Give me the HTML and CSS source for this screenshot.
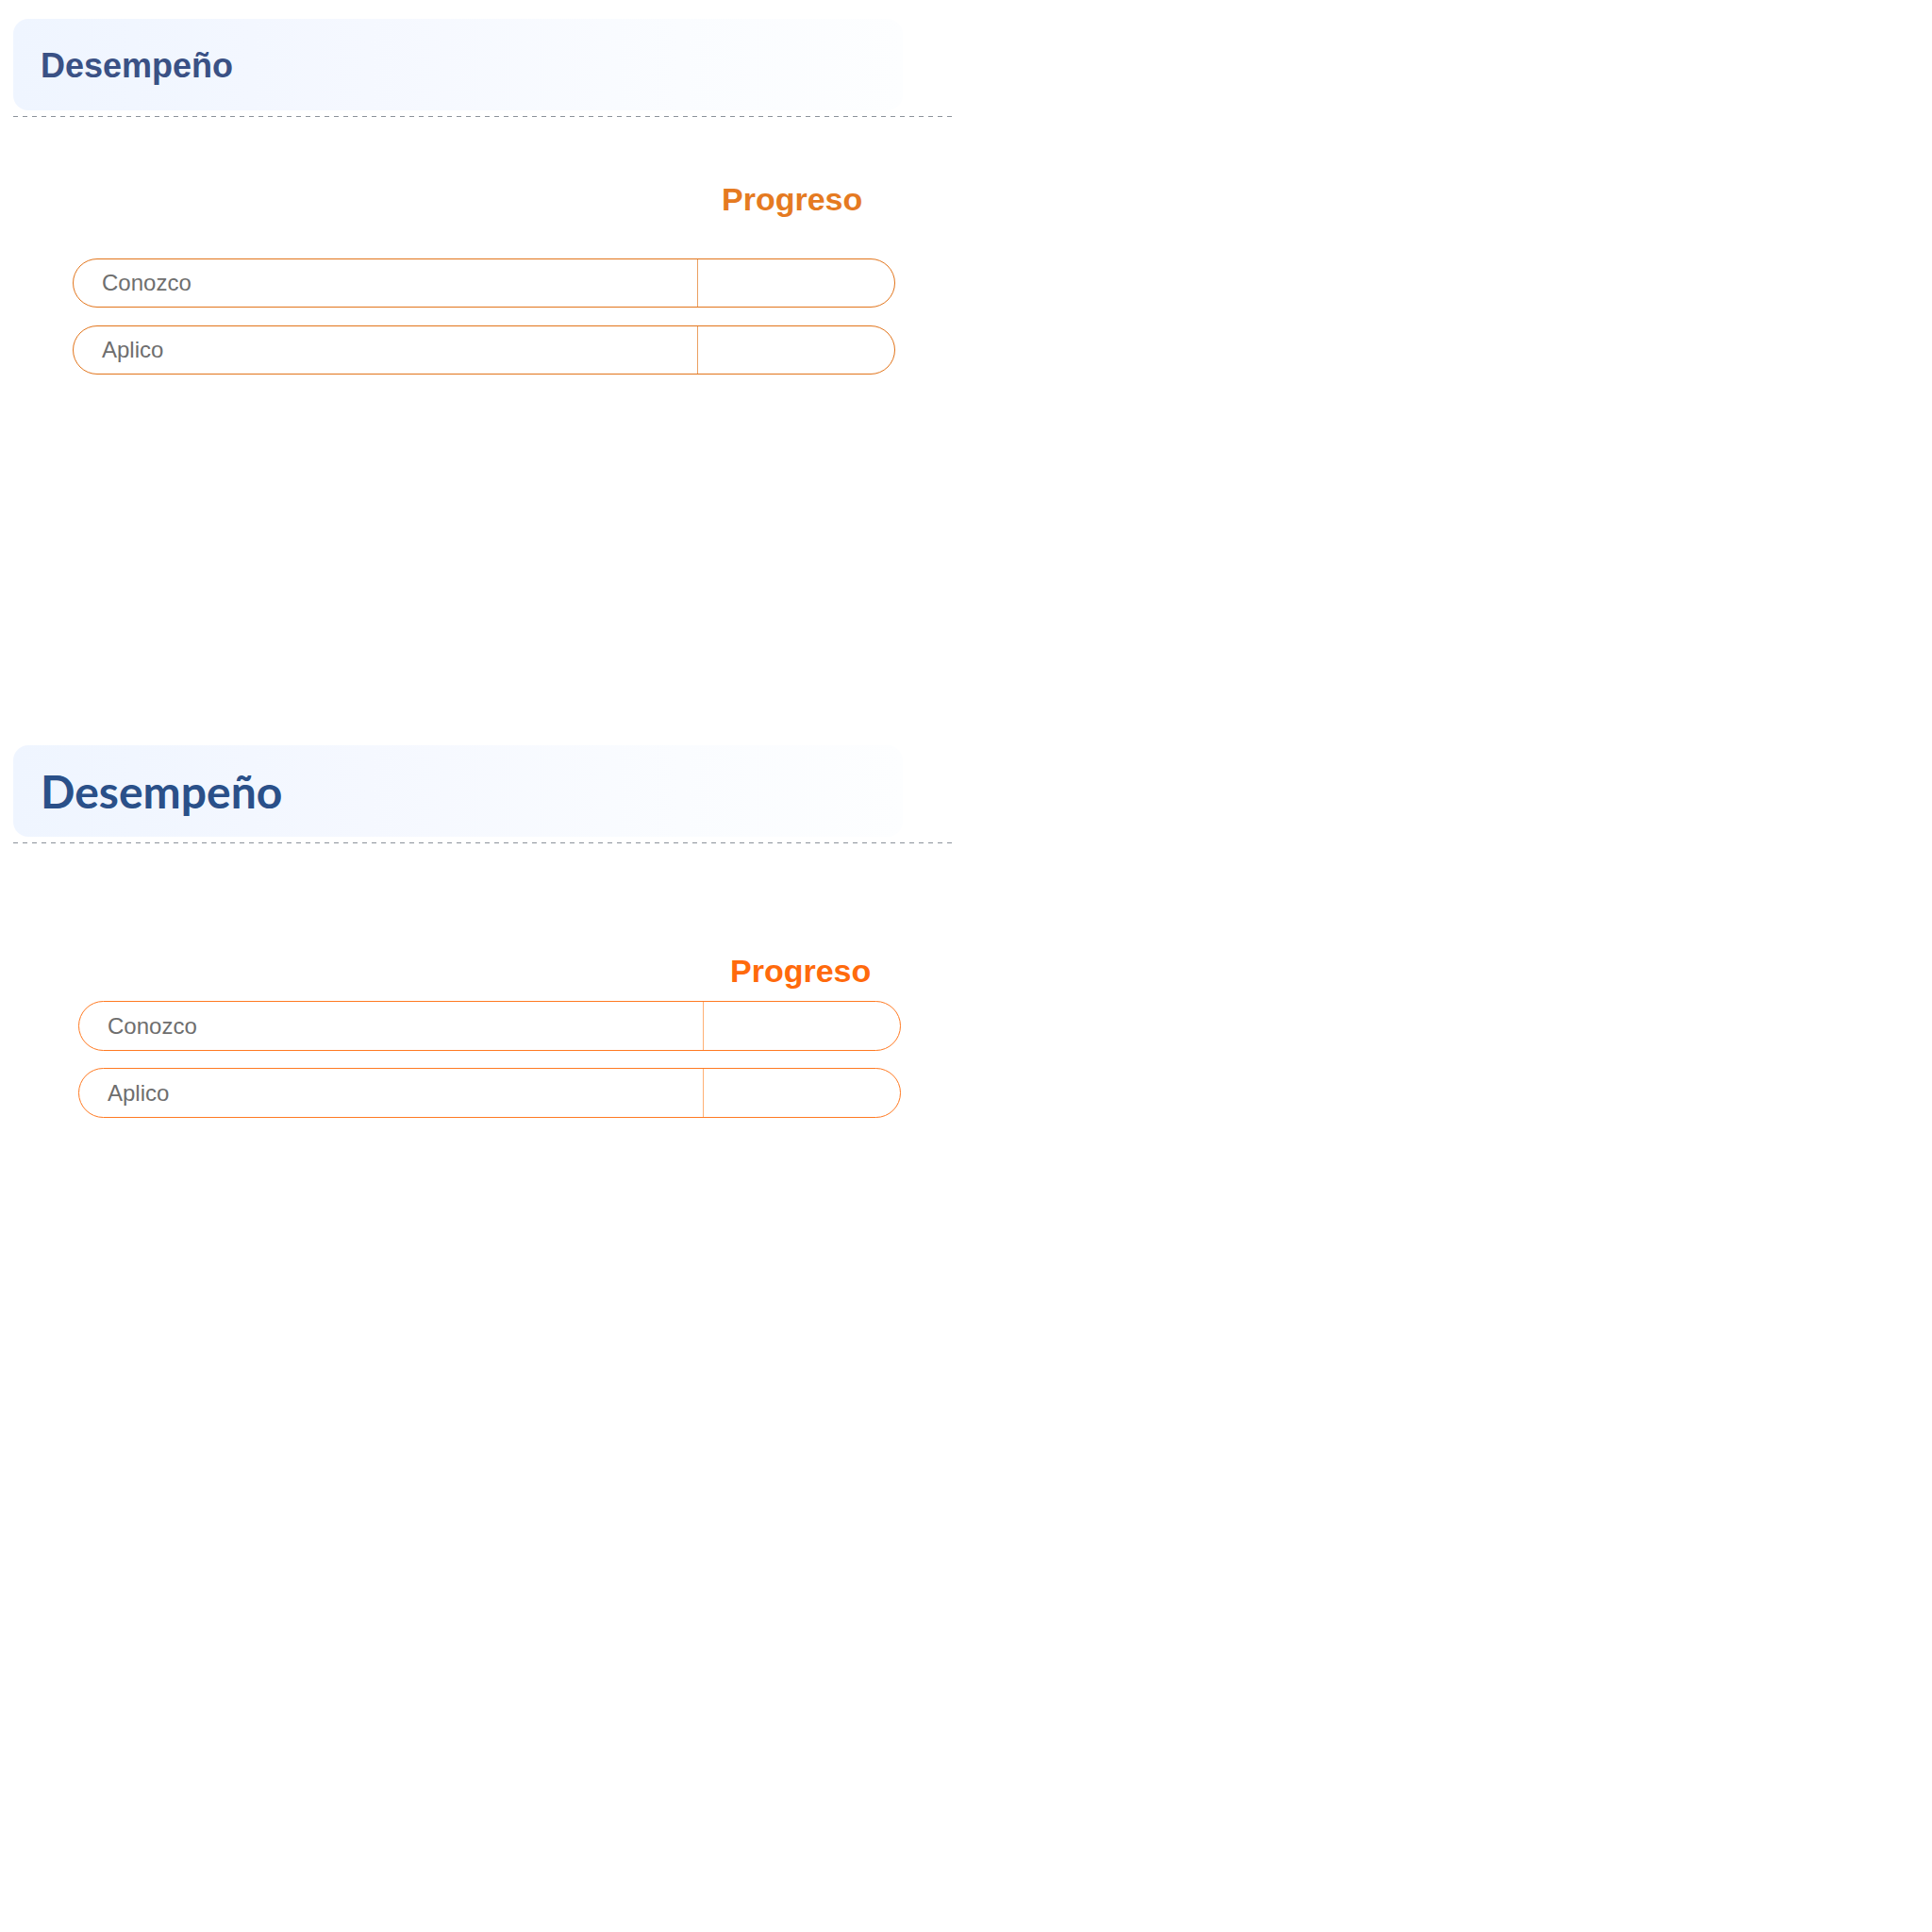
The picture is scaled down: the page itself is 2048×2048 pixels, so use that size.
FILE: index.html
```html
<!DOCTYPE html>
<html lang="es">
<head>
<meta charset="utf-8">
<title>Desempeño</title>
<link rel="stylesheet" href="styles.css">
</head>
<body>
<div class="page">
  <section class="perf perf-a">
    <div class="perf-head"><h2 class="perf-title">Desempeño</h2></div>
    <div class="perf-rule"></div>
    <div class="perf-table">
      <div class="perf-colhead"><span></span><span class="perf-progress">Progreso</span></div>
      <div class="perf-rows">
        <div class="perf-row"><div class="perf-label">Conozco</div><div class="perf-value"></div></div>
        <div class="perf-row"><div class="perf-label">Aplico</div><div class="perf-value"></div></div>
      </div>
    </div>
  </section>
  <section class="perf perf-b">
    <div class="perf-head"><h2 class="perf-title">Desempeño</h2></div>
    <div class="perf-rule"></div>
    <div class="perf-table">
      <div class="perf-colhead"><span></span><span class="perf-progress">Progreso</span></div>
      <div class="perf-rows">
        <div class="perf-row"><div class="perf-label">Conozco</div><div class="perf-value"></div></div>
        <div class="perf-row"><div class="perf-label">Aplico</div><div class="perf-value"></div></div>
      </div>
    </div>
  </section>
</div>
</body>
</html>
```
FILE: styles.css
```css
html, body {
  margin: 0;
  padding: 0;
  background: #ffffff;
}

.page {
  padding: 20px 0 0 14px;
  font-family: "Liberation Sans", Arial, sans-serif;
}

.perf {
  width: 998px;
}

.perf-a {
  margin-bottom: 393px;
}

.perf-head {
  width: 943px;
  height: 97px;
  box-sizing: border-box;
  border-radius: 16px;
  background: linear-gradient(90deg, #eff5ff 0%, #f5f8ff 40%, #fafcff 75%, #fdfeff 100%);
}

.perf-title {
  margin: 0;
  font-weight: 700;
}

.perf-a .perf-head {
  padding: 30px 29px 27px;
}

.perf-a .perf-title {
  font-family: "Liberation Sans", Arial, sans-serif;
  font-size: 36px;
  line-height: 40px;
  color: #3a5185;
}

.perf-b .perf-head {
  padding: 20px 29px 19px;
}

.perf-b .perf-title {
  font-family: Lato, "Liberation Sans", sans-serif;
  font-size: 48px;
  line-height: 58px;
  color: #2a5089;
}

.perf-rule {
  margin-top: 6px;
  width: 998px;
  height: 1px;
  background: repeating-linear-gradient(90deg, #8c929b 0 5px, transparent 5px 10px);
}

.perf-table {
  width: 872px;
}

.perf-a .perf-table {
  margin: 67px 0 0 63px;
}

.perf-b .perf-table {
  margin: 115px 0 0 69px;
}

.perf-colhead {
  display: grid;
  grid-template-columns: 662px 210px;
  height: 40px;
}

.perf-progress {
  font-size: 34px;
  line-height: 40px;
  font-weight: 700;
  white-space: nowrap;
}

.perf-a .perf-progress {
  padding-left: 26px;
  color: #e57a21;
}

.perf-b .perf-progress {
  padding-left: 29px;
  color: #ff6a0c;
}

.perf-rows {
  display: flex;
  flex-direction: column;
}

.perf-a .perf-rows {
  margin-top: 43px;
  gap: 19px;
}

.perf-b .perf-rows {
  margin-top: 12px;
  gap: 18px;
}

.perf-row {
  display: grid;
  grid-template-columns: 661px 1fr;
  box-sizing: border-box;
  border-radius: 27px;
  background: #ffffff;
}

.perf-a .perf-row {
  height: 52px;
  border: 1px solid #e2741a;
}

.perf-b .perf-row {
  height: 53px;
  border: 1px solid #ff7a22;
}

.perf-label {
  display: flex;
  align-items: center;
  padding-left: 30px;
  font-size: 24px;
  color: #6e6e6e;
}

.perf-value {
  border-left: 1px solid #eba062;
}

.perf-b .perf-value {
  border-left-color: #ffb074;
}
```
